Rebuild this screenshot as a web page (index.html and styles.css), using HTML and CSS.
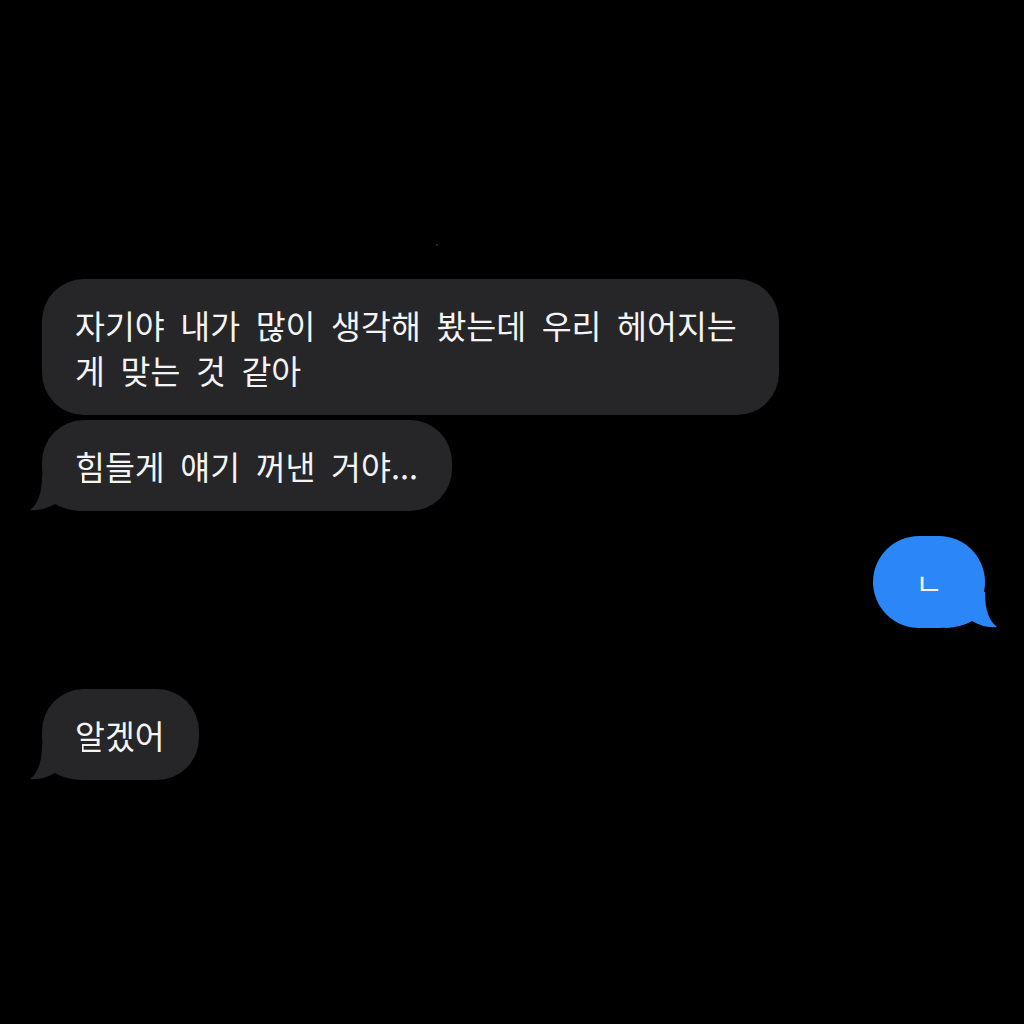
FILE: index.html
```html
<!DOCTYPE html>
<html lang="ko">
<head>
    <meta charset="UTF-8">
    <meta name="viewport" content="width=device-width, initial-scale=1.0">
    <title>메시지</title>
    <link rel="stylesheet" href="styles.css">
</head>
<body>
    <div class="thread">
        <span class="speck"></span>

        <div class="row in">
            <div class="bubble">자기야 내가 많이 생각해 봤는데 우리 헤어지는 게 맞는 것 같아</div>
        </div>
        <div class="row in">
            <div class="bubble tail">힘들게 얘기 꺼낸 거야...
                <svg class="tip" width="52" height="36" viewBox="0 0 52 36"><path d="M12,0 C12,18 8,29 0,35 C9,36 18,33 25,29 C32,33 40,35.5 52,36 L52,0 Z"/></svg>
            </div>
        </div>

        <div class="row out">
            <div class="bubble tail">ㄴ
                <svg class="tip" width="52" height="36" viewBox="0 0 52 36"><path d="M12,0 C12,18 8,29 0,35 C9,36 18,33 25,29 C32,33 40,35.5 52,36 L52,0 Z"/></svg>
            </div>
        </div>

        <div class="row in last">
            <div class="bubble tail">알겠어
                <svg class="tip" width="52" height="36" viewBox="0 0 52 36"><path d="M12,0 C12,18 8,29 0,35 C9,36 18,33 25,29 C32,33 40,35.5 52,36 L52,0 Z"/></svg>
            </div>
        </div>
    </div>
</body>
</html>
```

FILE: styles.css
```css
html, body {
    margin: 0;
    padding: 0;
    background-color: #000;
}
body {
    font-family: "Noto Sans CJK KR", "Noto Sans", sans-serif;
    color: #f4f4f4;
    width: 1024px;
    height: 1024px;
    overflow: hidden;
}
.thread {
    position: relative;
    display: flex;
    flex-direction: column;
    gap: 5px;
    padding: 279px 39px 0 42px;
}
.speck {
    position: absolute;
    left: 436px;
    top: 244px;
    width: 2px;
    height: 2px;
    background: #333;
    border-radius: 50%;
}
.row {
    display: flex;
}
.row.in {
    justify-content: flex-start;
}
.row.out {
    justify-content: flex-end;
    margin-top: 20px;
}
.row.last {
    margin-top: 56px;
}
.bubble {
    position: relative;
    max-width: 737px;
    box-sizing: border-box;
    padding: 23px 34px 23px 33px;
    border-radius: 42px;
    background-color: #262628;
    font-size: 32.5px;
    line-height: 45px;
    word-spacing: 6.5px;
}
.out .bubble {
    width: 112px;
    height: 92px;
    padding: 0;
    display: flex;
    align-items: center;
    justify-content: center;
    background-color: #2b86f7;
    font-size: 30px;
    border-radius: 46px;
}
.tip {
    position: absolute;
    left: -12px;
    bottom: 0;
    fill: #262628;
}
.out .tip {
    left: auto;
    right: -12px;
    fill: #2b86f7;
    transform: scaleX(-1);
}
```
